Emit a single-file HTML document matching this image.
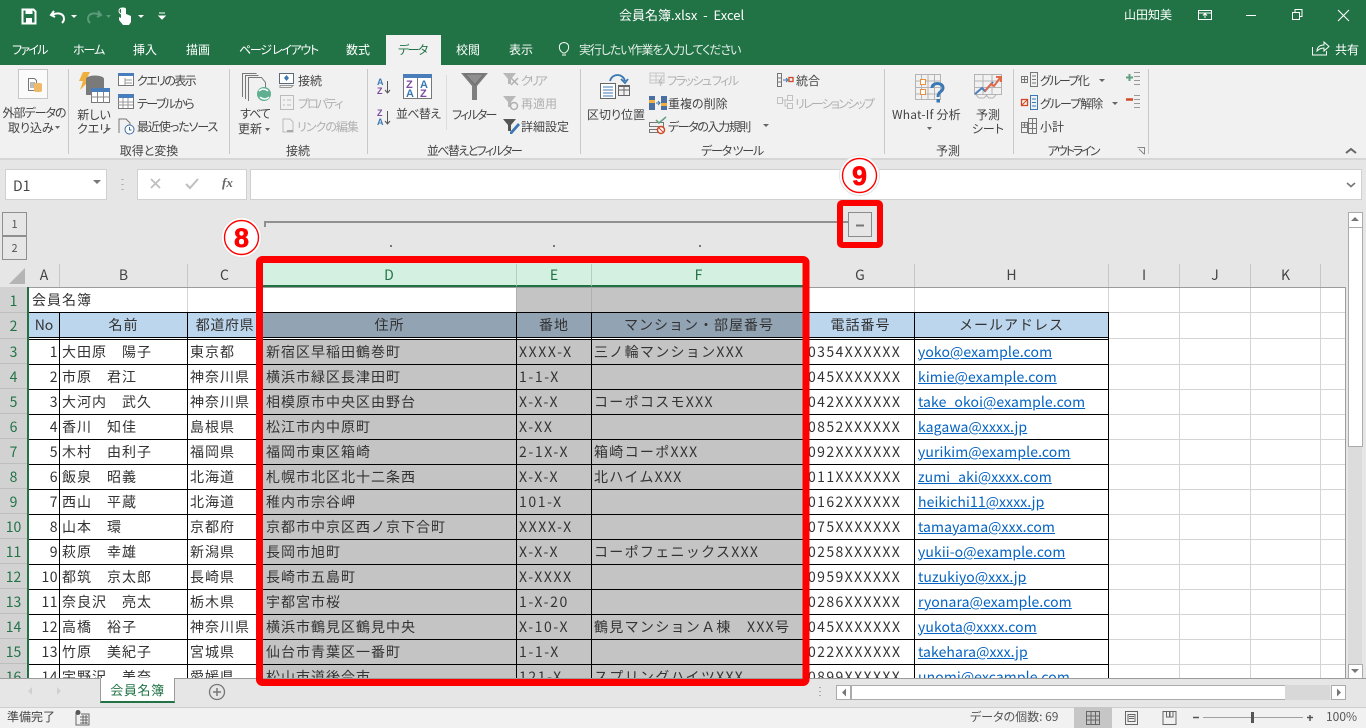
<!DOCTYPE html>
<html lang="ja"><head><meta charset="utf-8"><title>会員名簿.xlsx - Excel</title>
<style>
html,body{margin:0;padding:0;width:1366px;height:728px;overflow:hidden;background:#e6e6e6}
body{position:relative;font-family:"Noto Sans CJK JP","Liberation Sans",sans-serif;color:#444}
.abs,.t,.tab,.hd,.rh,.v,.h{position:absolute}
#ov{position:absolute;left:0;top:0;z-index:5}
.t{font-size:12px;line-height:16px;white-space:nowrap;font-feature-settings:"palt";color:#444;margin-top:1px}
.cn{transform:translateX(-50%)}
.g{color:#b0b0b0}
.tab{top:42px;font-size:12px;line-height:16px;color:#fff;white-space:nowrap;font-feature-settings:"palt"}
.hd{top:264px;height:23px;line-height:23px;text-align:center;font-size:14px;color:#444;border-right:1px solid #c6c6c6;box-sizing:border-box}
.hs{background:#d3f0e0;color:#217346;border-right:1px solid #b4cfc0;border-bottom:2px solid #217346}
.rh{left:0;width:27px;height:25px;line-height:27px;text-align:center;font-size:14px;color:#217346;border-bottom:1px solid #bdbdbd;box-sizing:border-box}
.v{width:1px}.h{height:1px}
.r{position:absolute;left:0;width:1345px;height:25px;line-height:25px;font-size:14px;letter-spacing:1px;white-space:nowrap;color:#333;margin-top:1px}
.r span{position:absolute;top:0}
.a{right:1287px;letter-spacing:.5px}.b{left:62px}.c{left:190px}.d{left:266px}.e{left:519px;letter-spacing:1.6px}.f{left:594px;letter-spacing:1.3px}.k{left:808px;letter-spacing:1.4px}
.m{left:918px;color:#0563c1;text-decoration:underline;letter-spacing:.1px}
.hc{position:absolute;top:313px;height:25px;line-height:25px;text-align:center;font-size:14px;letter-spacing:1px;color:#333}
</style></head><body>

<!-- title + tabs -->
<div class="abs" style="left:0;top:0;width:1366px;height:65px;background:#217346"></div>
<div class="abs" style="left:386px;top:35px;width:55px;height:31px;background:#f1f1f1"></div>
<div class="abs" style="left:0;top:65px;width:1366px;height:93px;background:#f1f1f1;border-bottom:2px solid #d6d6d6"></div>
<div class="t" style="left:619px;top:6px;font-size:13px;color:#fff;white-space:pre">会員名簿.xlsx  -  Excel</div>
<div class="t" style="left:1124px;top:6px;font-size:12px;color:#fff">山田知美</div>
<div class="tab" style="left:12px;letter-spacing:-1.7px">ファイル</div>
<div class="tab" style="left:73px;letter-spacing:-1px">ホーム</div>
<div class="tab" style="left:133px">挿入</div>
<div class="tab" style="left:186px">描画</div>
<div class="tab" style="left:239px;letter-spacing:-1.3px">ページ レイアウト</div>
<div class="tab" style="left:346px">数式</div>
<div class="tab" style="left:398px;color:#217346;letter-spacing:-1.6px">データ</div>
<div class="tab" style="left:456px">校閲</div>
<div class="tab" style="left:509px">表示</div>
<div class="tab" style="left:579px;color:#e4efe8;letter-spacing:-1.1px">実行したい作業を入力してください</div>
<div class="tab" style="left:1335px">共有</div>

<!-- ribbon text -->
<div class="t cn" style="left:34px;top:104px;letter-spacing:-1px">外部データの</div>
<div class="t" style="left:8px;top:119px">取り込み</div>
<div class="t cn" style="left:94px;top:106px">新しい</div>
<div class="t" style="left:77px;top:120px">クエリ</div>
<div class="t" style="left:137px;top:72px;letter-spacing:-1.6px">クエリの表示</div>
<div class="t" style="left:137px;top:95px;letter-spacing:-1.6px">テーブルから</div>
<div class="t" style="left:137px;top:118px;letter-spacing:-1.1px">最近使ったソース</div>
<div class="t cn" style="left:149px;top:142px">取得と変換</div>
<div class="t cn" style="left:255px;top:105px;letter-spacing:-1px">すべて</div>
<div class="t" style="left:238px;top:120px">更新</div>
<div class="t" style="left:298px;top:72px">接続</div>
<div class="t g" style="left:298px;top:95px;letter-spacing:-2px">プロパティ</div>
<div class="t g" style="left:297px;top:118px;letter-spacing:-1px">リンクの編集</div>
<div class="t cn" style="left:298px;top:142px">接続</div>
<div class="t" style="left:396px;top:105px;letter-spacing:-.7px">並べ替え</div>
<div class="t" style="left:452px;top:106px;letter-spacing:-1.8px">フィルター</div>
<div class="t g" style="left:521px;top:72px;letter-spacing:-2.5px">クリア</div>
<div class="t g" style="left:521px;top:95px">再適用</div>
<div class="t" style="left:521px;top:118px">詳細設定</div>
<div class="t cn" style="left:474px;top:142px;letter-spacing:-1.6px">並べ替えとフィルター</div>
<div class="t" style="left:587px;top:106px">区切り位置</div>
<div class="t g" style="left:667px;top:72px;letter-spacing:-1.5px">フラッシュ フィル</div>
<div class="t" style="left:668px;top:95px">重複の削除</div>
<div class="t" style="left:668px;top:118px;letter-spacing:-1.4px">データの入力規則</div>
<div class="t" style="left:796px;top:72px">統合</div>
<div class="t g" style="left:795px;top:95px;letter-spacing:-1.8px">リレーションシップ</div>
<div class="t cn" style="left:732px;top:142px;letter-spacing:-1.2px">データ ツール</div>
<div class="t" style="left:892px;top:106px;letter-spacing:.2px">What-If 分析</div>
<div class="t cn" style="left:988px;top:106px">予測</div>
<div class="t cn" style="left:988px;top:120px">シート</div>
<div class="t cn" style="left:948px;top:142px">予測</div>
<div class="t" style="left:1040px;top:72px;letter-spacing:-1.6px">グループ化</div>
<div class="t" style="left:1040px;top:95px;letter-spacing:-1px">グループ解除</div>
<div class="t" style="left:1040px;top:118px">小計</div>
<div class="t cn" style="left:1073px;top:142px;letter-spacing:-2px">アウトライン</div>

<!-- formula bar -->
<div class="abs" style="left:5px;top:169px;width:100px;height:29px;background:#fff;border:1px solid #d0d0d0"></div>
<div class="t" style="left:13px;top:176px;font-size:14px;line-height:18px">D1</div>
<div class="abs" style="left:137px;top:169px;width:108px;height:29px;background:#fff;border:1px solid #d0d0d0"></div>
<div class="abs" style="left:250px;top:169px;width:1110px;height:29px;background:#fff;border:1px solid #d0d0d0"></div>
<div class="t" style="left:222px;top:174px;font-family:'Liberation Serif',serif;font-style:italic;font-weight:bold;font-size:13px;color:#666">fx</div>

<!-- outline level -->
<div class="abs" style="left:2px;top:212px;width:23px;height:22px;border:1px solid #8f8f8f;text-align:center;font-size:11px;line-height:22px;color:#555">1</div>
<div class="abs" style="left:2px;top:236px;width:23px;height:22px;border:1px solid #8f8f8f;text-align:center;font-size:11px;line-height:22px;color:#555">2</div>

<!-- sheet -->
<div class="abs" style="left:29px;top:288px;width:1316px;height:390px;background:#fff"></div>
<div class="abs" style="left:517px;top:288px;width:289px;height:25px;background:#c4c4c4"></div>
<div class="abs" style="left:29px;top:313px;width:233px;height:25px;background:#bcd6ee"></div>
<div class="abs" style="left:262px;top:313px;width:544px;height:25px;background:#92a3b3"></div>
<div class="abs" style="left:806px;top:313px;width:302px;height:25px;background:#bcd6ee"></div>
<div class="abs" style="left:262px;top:339px;width:544px;height:339px;background:#c4c4c4"></div>
<div class="abs" style="left:0;top:287px;width:27px;height:391px;background:#d2d2d2"></div>
<div class="abs" style="left:27px;top:287px;width:2px;height:391px;background:#217346"></div>
<div class="abs" style="left:29px;top:287px;width:1317px;height:1px;background:#9c9c9c"></div>
<div class="abs" style="left:1345px;top:287px;width:1px;height:391px;background:#9c9c9c"></div>

<!-- light gridlines -->
<div class="v" style="left:187px;top:288px;height:25px;background:#d4d4d4"></div>
<div class="v" style="left:516px;top:288px;height:25px;background:#b0b0b0"></div>
<div class="v" style="left:591px;top:288px;height:25px;background:#b0b0b0"></div>
<div class="v" style="left:806px;top:288px;height:25px;background:#d4d4d4"></div>
<div class="v" style="left:914px;top:288px;height:25px;background:#d4d4d4"></div>
<div class="v" style="left:1108px;top:288px;height:25px;background:#d4d4d4"></div>
<div class="v" style="left:1179px;top:288px;height:390px;background:#d4d4d4"></div>
<div class="v" style="left:1250px;top:288px;height:390px;background:#d4d4d4"></div>
<div class="v" style="left:1320px;top:288px;height:390px;background:#d4d4d4"></div>
<div class="h" style="left:1109px;top:312px;width:236px;background:#d4d4d4"></div>
<div class="h" style="left:1109px;top:338px;width:236px;background:#d4d4d4"></div>
<div class="h" style="left:1109px;top:364px;width:236px;background:#d4d4d4"></div>
<div class="h" style="left:1109px;top:389px;width:236px;background:#d4d4d4"></div>
<div class="h" style="left:1109px;top:414px;width:236px;background:#d4d4d4"></div>
<div class="h" style="left:1109px;top:439px;width:236px;background:#d4d4d4"></div>
<div class="h" style="left:1109px;top:464px;width:236px;background:#d4d4d4"></div>
<div class="h" style="left:1109px;top:489px;width:236px;background:#d4d4d4"></div>
<div class="h" style="left:1109px;top:514px;width:236px;background:#d4d4d4"></div>
<div class="h" style="left:1109px;top:539px;width:236px;background:#d4d4d4"></div>
<div class="h" style="left:1109px;top:564px;width:236px;background:#d4d4d4"></div>
<div class="h" style="left:1109px;top:589px;width:236px;background:#d4d4d4"></div>
<div class="h" style="left:1109px;top:614px;width:236px;background:#d4d4d4"></div>
<div class="h" style="left:1109px;top:639px;width:236px;background:#d4d4d4"></div>
<div class="h" style="left:1109px;top:664px;width:236px;background:#d4d4d4"></div>

<!-- black borders -->
<div class="v" style="left:59px;top:312px;height:366px;background:#000"></div>
<div class="v" style="left:187px;top:312px;height:366px;background:#000"></div>
<div class="v" style="left:262px;top:312px;height:366px;background:#000"></div>
<div class="v" style="left:516px;top:312px;height:366px;background:#000"></div>
<div class="v" style="left:591px;top:312px;height:366px;background:#000"></div>
<div class="v" style="left:806px;top:312px;height:366px;background:#000"></div>
<div class="v" style="left:914px;top:312px;height:366px;background:#000"></div>
<div class="v" style="left:1108px;top:312px;height:366px;background:#000"></div>
<div class="h" style="left:29px;top:312px;width:1080px;background:#000"></div>
<div class="h" style="left:29px;top:337px;width:1080px;background:#000"></div>
<div class="h" style="left:29px;top:339px;width:1080px;background:#000"></div>
<div class="h" style="left:29px;top:364px;width:1080px;background:#000"></div>
<div class="h" style="left:29px;top:389px;width:1080px;background:#000"></div>
<div class="h" style="left:29px;top:414px;width:1080px;background:#000"></div>
<div class="h" style="left:29px;top:439px;width:1080px;background:#000"></div>
<div class="h" style="left:29px;top:464px;width:1080px;background:#000"></div>
<div class="h" style="left:29px;top:489px;width:1080px;background:#000"></div>
<div class="h" style="left:29px;top:514px;width:1080px;background:#000"></div>
<div class="h" style="left:29px;top:539px;width:1080px;background:#000"></div>
<div class="h" style="left:29px;top:564px;width:1080px;background:#000"></div>
<div class="h" style="left:29px;top:589px;width:1080px;background:#000"></div>
<div class="h" style="left:29px;top:614px;width:1080px;background:#000"></div>
<div class="h" style="left:29px;top:639px;width:1080px;background:#000"></div>
<div class="h" style="left:29px;top:664px;width:1080px;background:#000"></div>

<!-- column headers -->
<div class="hd" style="left:29px;width:31px">A</div>
<div class="hd" style="left:60px;width:128px">B</div>
<div class="hd" style="left:188px;width:74px">C</div>
<div class="hd hs" style="left:262px;width:255px">D</div>
<div class="hd hs" style="left:517px;width:75px">E</div>
<div class="hd hs" style="left:592px;width:214px">F</div>
<div class="hd" style="left:806px;width:109px">G</div>
<div class="hd" style="left:915px;width:194px">H</div>
<div class="hd" style="left:1109px;width:71px">I</div>
<div class="hd" style="left:1180px;width:71px">J</div>
<div class="hd" style="left:1251px;width:70px">K</div>

<!-- row headers -->
<div class="rh" style="top:288px">1</div>
<div class="rh" style="top:313px;height:26px;line-height:26px">2</div>
<div class="rh" style="top:339px">3</div>
<div class="rh" style="top:364px">4</div>
<div class="rh" style="top:389px">5</div>
<div class="rh" style="top:414px">6</div>
<div class="rh" style="top:439px">7</div>
<div class="rh" style="top:464px">8</div>
<div class="rh" style="top:489px">9</div>
<div class="rh" style="top:514px">10</div>
<div class="rh" style="top:539px">11</div>
<div class="rh" style="top:564px">12</div>
<div class="rh" style="top:589px">13</div>
<div class="rh" style="top:614px">14</div>
<div class="rh" style="top:639px">15</div>
<div class="rh" style="top:664px">16</div>

<!-- cells -->
<div class="r" style="top:287px"><span style="left:32px">会員名簿</span></div>
<div class="hc" style="left:29px;width:30px;letter-spacing:0">No</div>
<div class="hc" style="left:60px;width:127px">名前</div>
<div class="hc" style="left:188px;width:74px;letter-spacing:.6px">都道府県</div>
<div class="hc" style="left:263px;width:253px">住所</div>
<div class="hc" style="left:517px;width:74px">番地</div>
<div class="hc" style="left:592px;width:214px">マンション・部屋番号</div>
<div class="hc" style="left:807px;width:107px">電話番号</div>
<div class="hc" style="left:915px;width:193px">メールアドレス</div>

<div class="r" style="top:339px"><span class="a">1</span><span class="b">大田原　陽子</span><span class="c">東京都</span><span class="d">新宿区早稲田鶴巻町</span><span class="e">XXXX-X</span><span class="f">三ノ輪マンションXXX</span><span class="k">0354XXXXXX</span><span class="m">yoko@example.com</span></div>
<div class="r" style="top:364px"><span class="a">2</span><span class="b">市原　君江</span><span class="c">神奈川県</span><span class="d">横浜市緑区長津田町</span><span class="e">1-1-X</span><span class="k">045XXXXXXX</span><span class="m">kimie@example.com</span></div>
<div class="r" style="top:389px"><span class="a">3</span><span class="b">大河内　武久</span><span class="c">神奈川県</span><span class="d">相模原市中央区由野台</span><span class="e">X-X-X</span><span class="f">コーポコスモXXX</span><span class="k">042XXXXXXX</span><span class="m">take_okoi@example.com</span></div>
<div class="r" style="top:414px"><span class="a">4</span><span class="b">香川　知佳</span><span class="c">島根県</span><span class="d">松江市内中原町</span><span class="e">X-XX</span><span class="k">0852XXXXXX</span><span class="m">kagawa@xxxx.jp</span></div>
<div class="r" style="top:439px"><span class="a">5</span><span class="b">木村　由利子</span><span class="c">福岡県</span><span class="d">福岡市東区箱崎</span><span class="e">2-1X-X</span><span class="f">箱崎コーポXXX</span><span class="k">092XXXXXXX</span><span class="m">yurikim@example.com</span></div>
<div class="r" style="top:464px"><span class="a">6</span><span class="b">飯泉　昭義</span><span class="c">北海道</span><span class="d">札幌市北区北十二条西</span><span class="e">X-X-X</span><span class="f">北ハイムXXX</span><span class="k">011XXXXXXX</span><span class="m">zumi_aki@xxxx.com</span></div>
<div class="r" style="top:489px"><span class="a">7</span><span class="b">西山　平蔵</span><span class="c">北海道</span><span class="d">稚内市宗谷岬</span><span class="e">101-X</span><span class="k">0162XXXXXX</span><span class="m">heikichi11@xxxx.jp</span></div>
<div class="r" style="top:514px"><span class="a">8</span><span class="b">山本　環</span><span class="c">京都府</span><span class="d">京都市中京区西ノ京下合町</span><span class="e">XXXX-X</span><span class="k">075XXXXXXX</span><span class="m">tamayama@xxx.com</span></div>
<div class="r" style="top:539px"><span class="a">9</span><span class="b">萩原　幸雄</span><span class="c">新潟県</span><span class="d">長岡市旭町</span><span class="e">X-X-X</span><span class="f">コーポフェニックスXXX</span><span class="k">0258XXXXXX</span><span class="m">yukii-o@example.com</span></div>
<div class="r" style="top:564px"><span class="a">10</span><span class="b">都筑　京太郎</span><span class="c">長崎県</span><span class="d">長崎市五島町</span><span class="e">X-XXXX</span><span class="k">0959XXXXXX</span><span class="m">tuzukiyo@xxx.jp</span></div>
<div class="r" style="top:589px"><span class="a">11</span><span class="b">奈良沢　亮太</span><span class="c">栃木県</span><span class="d">宇都宮市桜</span><span class="e">1-X-20</span><span class="k">0286XXXXXX</span><span class="m">ryonara@example.com</span></div>
<div class="r" style="top:614px"><span class="a">12</span><span class="b">高橋　裕子</span><span class="c">神奈川県</span><span class="d">横浜市鶴見区鶴見中央</span><span class="e">X-10-X</span><span class="f">鶴見マンションＡ棟　XXX号</span><span class="k">045XXXXXXX</span><span class="m">yukota@xxxx.com</span></div>
<div class="r" style="top:639px"><span class="a">13</span><span class="b">竹原　美紀子</span><span class="c">宮城県</span><span class="d">仙台市青葉区一番町</span><span class="e">1-1-X</span><span class="k">022XXXXXXX</span><span class="m">takehara@xxx.jp</span></div>
<div class="r" style="top:664px"><span class="a">14</span><span class="b">宇野沢　美奈</span><span class="c">愛媛県</span><span class="d">松山市道後今市</span><span class="e">121-X</span><span class="f">スプリングハイツXXX</span><span class="k">0899XXXXXX</span><span class="m">unomi@excample.com</span></div>

<!-- bottom bars -->
<div class="abs" style="left:0;top:678px;width:1366px;height:29px;background:#e6e6e6;border-top:1px solid #9c9c9c;box-sizing:border-box;z-index:2"></div>
<div class="abs" style="left:100px;top:678px;width:75px;height:25px;background:#fff;border:1px solid #9c9c9c;border-top:0;border-bottom:2px solid #217346;box-sizing:border-box;text-align:center;font-size:13px;line-height:24px;color:#217346;letter-spacing:.6px;z-index:3">会員名簿</div>
<div class="abs" style="left:851px;top:685px;width:434px;height:13px;background:#fff;border:1px solid #ababab;z-index:3"></div>
<div class="abs" style="left:0;top:707px;width:1366px;height:21px;background:#f1f1f1;border-top:1px solid #cfcfcf;box-sizing:border-box;z-index:3"></div>
<div class="abs" style="left:1074px;top:707px;width:38px;height:21px;background:#c6c6c6;z-index:3"></div>
<div class="t" style="left:7px;top:708px;z-index:4">準備完了</div>
<div class="t" style="left:970px;top:708px;z-index:4;color:#555">データの個数: 69</div>
<div class="t" style="left:1326px;top:708px;z-index:4;color:#555">100%</div>

<!-- vertical scrollbar -->
<div class="abs" style="left:1348px;top:212px;width:14px;height:466px;background:#dcdcdc"></div>
<div class="abs" style="left:1348px;top:212px;width:13px;height:14px;background:#fff;border:1px solid #ababab"></div>
<div class="abs" style="left:1348px;top:227px;width:13px;height:218px;background:#fff;border:1px solid #ababab"></div>
<div class="abs" style="left:1348px;top:664px;width:13px;height:13px;background:#fff;border:1px solid #ababab"></div>

<!-- icons and annotations -->
<svg id="ov" width="1366" height="728" viewBox="0 0 1366 728" xmlns="http://www.w3.org/2000/svg" fill="none">
<!-- QAT -->
<path d="M22.5 9.5h11l2 2v12h-13z" stroke="#fff" stroke-width="2"/><rect x="25.5" y="10" width="7" height="4" fill="#fff"/><rect x="26" y="18" width="6" height="5" fill="#fff"/>
<path d="M54 11l-3 4 4 2M52 15c5-3 12-2 12 4 0 2-1 3-2 4" stroke="#fff" stroke-width="2"/><path d="M71 15h6l-3 3z" fill="#fff"/>
<path d="M98 11l3 4-4 2M100 15c-5-3-12-2-12 4 0 2 1 3 2 4" stroke="#5b9a78" stroke-width="2"/><path d="M106 15h5l-2.500 3z" fill="#5b9a78"/>
<path d="M121 9c0-2 5-2 5 0v5l5 2v6l-2 3h-6l-4-5 0-3 2 1z" fill="#fff"/><circle cx="122" cy="11" r="3" stroke="#fff"/>
<path d="M138 15h6l-3 3z" fill="#fff"/>
<path d="M159 13h6M159 16h6l-3 3z" stroke="#fff" fill="#fff"/>
<!-- window controls -->
<path d="M1198.500 10.500h13v9h-13zM1198.500 13h13M1205 18v-4M1203 15.500l2-2 2 2" stroke="#fff"/>
<path d="M1246 15.500h10" stroke="#fff"/>
<path d="M1292.500 12.500h7v7h-7zM1295 12v-2.500h7v7h-2.500" stroke="#fff"/>
<path d="M1338 10l11 11M1349 10l-11 11" stroke="#fff" stroke-width="1.100"/>
<!-- tell me / share -->
<path d="M563 53c-5-3-5-10 1-10.500 6 .5 6 7.500 1 10.500zM562 55h4" stroke="#fff"/>
<path d="M1312.500 47v8h14v-4M1317 51c0-4 3-6 7-6v-3l5 4.500-5 4.500v-3c-3 0-5 1-7 3z" stroke="#fff"/>
<!-- group separators -->
<path d="M68.500 69v85M229.500 69v85M367.500 69v85M580.500 69v85M884.500 69v85M1013.500 69v85M1148.500 69v85" stroke="#c8c8c8"/>
<path d="M446.500 75v55" stroke="#dcdcdc"/>
<!-- external data -->
<rect x="18.500" y="69.500" width="29" height="29" fill="#fbfbfb" stroke="#c6c6c6"/>
<path d="M28.500 78.500h6l2 2v10h-8z" stroke="#777" fill="#fff"/><path d="M30 83h5M30 85h5M30 87h5" stroke="#777"/><rect x="34" y="83" width="8" height="9" rx="2" fill="#eeb968"/>
<path d="M55 126h5l-2.500 3z" fill="#666"/>
<!-- new query -->
<path d="M83 72h7l-4 8h4l-10 10 3-9h-4z" fill="#f0b040"/>
<ellipse cx="95" cy="79" rx="9" ry="3.500" fill="#7a7a7a"/><path d="M86 79v16h18V79z" fill="#7a7a7a"/>
<rect x="91.500" y="88.500" width="18" height="14" fill="#fff" stroke="#777"/><rect x="91" y="88" width="19" height="4" fill="#4a7ebb"/><path d="M91 97h19M97.500 92v11M103.500 92v11" stroke="#888"/>
<path d="M105 128h6l-3 3z" fill="#666"/>
<rect x="118.500" y="73.500" width="15" height="12" fill="#fff" stroke="#777"/><rect x="118" y="73" width="16" height="3" fill="#4a7ebb"/><path d="M125 78v7M125 80h7M125 83h7" stroke="#999"/>
<rect x="118.500" y="95.500" width="15" height="13" fill="#fff" stroke="#777"/><rect x="118" y="94" width="16" height="4" fill="#4a7ebb"/><path d="M118 102h15M118 105h15M123 98v10M128 98v10" stroke="#999"/>
<path d="M119 133v-14h7l4 4v4" stroke="#777"/><circle cx="129.500" cy="129.500" r="4.500" fill="#fff" stroke="#3c6ea8"/><path d="M129.500 127v3h2" stroke="#3c6ea8"/>
<!-- refresh all -->
<path d="M242.500 97V73.500h14M245.500 99V75.500h13M248.500 101V77.500h13l4 5V92" stroke="#777" fill="#f1f1f1"/>
<circle cx="264" cy="94" r="7" fill="#5fb090"/><path d="M259 91c3-3 7-2 9 0M269 97c-3 3-7 2-9 0" stroke="#fff" stroke-width="1.500"/>
<path d="M265 128h5l-2.500 3z" fill="#666"/>
<rect x="279.500" y="73.500" width="14" height="10" stroke="#5a6a7a" fill="#fff"/><path d="M286.500 75l2.500 3-2.500 3-2.500-3z" fill="#3c78b4"/><path d="M280 85.500h13l-2 2h-11z" stroke="#999"/>
<rect x="280.500" y="95.500" width="13" height="14" stroke="#bbb"/><path d="M283 100h2M283 105h2M287 100h4M287 105h4" stroke="#bbb"/>
<path d="M283 132v-13h7l3 3v10z" stroke="#bbb"/><path d="M287 131h6" stroke="#aaa" stroke-width="2"/>
<!-- sort -->
<text x="377" y="85" font-family="Liberation Sans,sans-serif" font-size="9" font-weight="bold" fill="#3c78b4">A</text><text x="377" y="94" font-family="Liberation Sans,sans-serif" font-size="9" font-weight="bold" fill="#7a4ba0">Z</text>
<path d="M387.500 81v12M385 90l2.500 3 2.500-3" stroke="#555"/>
<text x="377" y="116" font-family="Liberation Sans,sans-serif" font-size="9" font-weight="bold" fill="#7a4ba0">Z</text><text x="377" y="125" font-family="Liberation Sans,sans-serif" font-size="9" font-weight="bold" fill="#3c78b4">A</text>
<path d="M387.500 111v13M385 121l2.500 3 2.500-3" stroke="#555"/>
<rect x="403.500" y="74.500" width="28" height="24" fill="#fff" stroke="#777"/><rect x="403" y="74" width="29" height="4" fill="#4a7ebb"/><path d="M417.500 78v20" stroke="#777"/>
<text x="406" y="88" font-family="Liberation Sans,sans-serif" font-size="11" font-weight="bold" fill="#7a4ba0">Z</text><text x="420" y="88" font-family="Liberation Sans,sans-serif" font-size="11" font-weight="bold" fill="#3c78b4">A</text>
<text x="406" y="97" font-family="Liberation Sans,sans-serif" font-size="11" font-weight="bold" fill="#3c78b4">A</text><text x="420" y="97" font-family="Liberation Sans,sans-serif" font-size="11" font-weight="bold" fill="#7a4ba0">Z</text>
<!-- filter -->
<path d="M461 73h27l-11 13v14h-5V86z" fill="#7f7f7f"/><path d="M465 74h19l-9 11z" fill="#8e8e8e" stroke="#6e6e6e"/>
<path d="M503 73h13l-5 6v5h-3v-5z" fill="#b8b8b8"/><path d="M511 78l7 7M518 78l-7 7" stroke="#b0b0b0" stroke-width="1.500"/>
<path d="M503 96h13l-5 6v5h-3v-5z" fill="#b8b8b8"/><circle cx="514" cy="106" r="3.500" stroke="#b0b0b0" stroke-width="1.500"/>
<path d="M503 119h13l-5 6v6h-3v-6z" fill="#555"/><path d="M510 132l8-9 2 2-8 9h-2z" fill="#3c78b4"/>
<!-- text to columns -->
<rect x="600.500" y="83.500" width="15" height="15" fill="#fff" stroke="#666"/><path d="M603 87h10M603 90h10M603 93h10M603 96h10" stroke="#3c78b4"/>
<path d="M618.500 85.500h11v10h-11zM618 90h12M624 86v10" stroke="#666"/><rect x="618" y="85" width="12" height="2" fill="#666"/>
<path d="M610 81c2-8 13-8 15 0M621 79l4 4 3-4" stroke="#3c78b4" stroke-width="1.800"/>
<!-- flash fill, dup, validation -->
<path d="M650 73h14v10h-14zM650 76h14M650 80h14M656 73v10" stroke="#c6c6c6"/><path d="M662 77l-3 5h3l-2 4" stroke="#b8b8b8"/>
<rect x="649" y="96" width="6" height="14" fill="#4a6fa0"/><rect x="649" y="100" width="6" height="3" fill="#f0b040"/><rect x="661" y="96" width="6" height="14" fill="#4a6fa0"/><rect x="661" y="103" width="6" height="3" fill="#f0b040"/><path d="M656 103h4M658 101l2 2-2 2" stroke="#3c78b4"/>
<path d="M649.500 122.500h14v4h-14zM649.500 129.500h10v3h-10z" stroke="#777"/><path d="M656 120l3 3 7-6" stroke="#5fa080" stroke-width="1.500"/><circle cx="661" cy="130" r="3.500" fill="#fff" stroke="#d24726" stroke-width="1.500"/><path d="M659 128l4 4" stroke="#d24726"/>
<path d="M763 124h6l-3 3z" fill="#666"/>
<!-- consolidate, relations -->
<path d="M777.500 73.500h4v13h-4zM777.500 78h4M777.500 82h4" stroke="#777"/><path d="M783 80h4M786 78l2 2-2 2" stroke="#3c78b4"/><rect x="789" y="77.500" width="4" height="4" stroke="#d24726" stroke-width="1.300"/>
<path d="M777.500 97.500h5v6h-5zM787.500 95.500h5v5h-5zM787.500 103.500h5v5h-5zM782 100h5M785 100v6h3" stroke="#c0c0c0"/>
<!-- what-if -->
<path d="M915.500 74.500h25v25h-25zM915 81h25M915 87.500h25M915 94h25M921.500 74v25M928 74v25M934.500 74v25" stroke="#b4b4b4"/>
<rect x="920.500" y="79.500" width="5" height="5" fill="#fff" stroke="#e89040"/><rect x="920.500" y="89.500" width="5" height="5" fill="#fff" stroke="#e89040"/>
<path d="M932 88c0-6 11-6 11 0 0 4-5 3-5 9" stroke="#3c78b4" stroke-width="3"/><rect x="936.500" y="99" width="3.500" height="3.500" fill="#3c78b4"/>
<path d="M927 127h5l-2.500 3z" fill="#666"/>
<!-- forecast -->
<path d="M974.500 74.500h27v20h-27zM974 81h27M974 87.500h27M983 74v21M992 74v21" stroke="#b4b4b4"/>
<path d="M975 94l7-6 3 3 8-9" stroke="#4a7ebb" stroke-width="2"/><path d="M985 91l6-7 3 2 6-8M996 77h5v5" stroke="#e06a48" stroke-width="2"/>
<path d="M976 95l3 3h5l3-3M986 95l3 3h4l3-3" stroke="#b4b4b4"/>
<!-- outline -->
<path d="M1021.500 76.500h6v6h-6zM1022 79.500h5M1024.500 77v5M1030.500 72.500h7v14h-7zM1032 76h4M1032 79.500h4M1032 83h4" stroke="#777"/>
<path d="M1030.500 95.500h7v14h-7zM1032 99h4M1032 102.500h4M1032 106h4" stroke="#3c78b4"/><rect x="1021.500" y="99.500" width="6" height="6" stroke="#d24726" stroke-width="1.300"/><path d="M1022 105l5-5" stroke="#d24726"/>
<path d="M1021.500 122.500h6v5h-6zM1021.500 127.500h6v5h-6zM1022 125h5M1024.500 123v4M1028.500 118.500h8v15h-8zM1028 123.500h9M1028 128.500h9M1032.500 118v16" stroke="#777"/>
<path d="M1099 79h6l-3 3zM1112 102h6l-3 3z" fill="#666"/>
<path d="M1126 77.500h7M1129.500 74v7" stroke="#5fa080" stroke-width="2"/><path d="M1134 72.500h6M1134 76.500h6M1134 80.500h6M1134 84.500h6" stroke="#999"/>
<path d="M1126 99.500h7" stroke="#d24726" stroke-width="2.500"/><path d="M1134 95.500h6M1134 99.500h6M1134 103.500h6M1134 107.500h6" stroke="#999"/>
<path d="M1137.500 147.500h7v7M1139 149l5 5" stroke="#888"/>
<path d="M1346 153l5-4 5 4" stroke="#666" stroke-width="2"/>
<!-- formula bar icons -->
<path d="M93 180h8l-4 4z" fill="#777"/>
<path d="M122.500 179v1M122.500 184v1M122.500 189v1" stroke="#aaa" stroke-width="2"/>
<path d="M151 179l9 9M160 179l-9 9" stroke="#bfbfbf" stroke-width="1.800"/>
<path d="M186 184l4 4 8-9" stroke="#bfbfbf" stroke-width="2"/>
<path d="M1347 183l4 3.500 4-3.500" stroke="#777" stroke-width="1.600"/>
<!-- corner triangle -->
<path d="M25 268v16H9z" fill="#b4b4b4"/>
<!-- outline bar -->
<path d="M265 227v-5h583" stroke="#909090" stroke-width="2"/>
<rect x="390" y="245" width="2" height="2" fill="#777"/><rect x="553" y="245" width="2" height="2" fill="#777"/><rect x="699" y="245" width="2" height="2" fill="#777"/>
<rect x="848.500" y="212.500" width="23" height="24" fill="#e6e6e6" stroke="#8a8a8a"/><path d="M856 225.500h8" stroke="#777" stroke-width="2"/>
<!-- scroll arrows -->
<path d="M1351 221l4-4 4 4z" fill="#777"/><path d="M1351 669l4 4 4-4z" fill="#777"/>
<!-- tab bar -->
<path d="M32 687v8l-4-4zM57 687v8l4-4z" fill="#d0d0d0"/>
<circle cx="217" cy="692" r="7.500" stroke="#777" stroke-width="1.300"/><path d="M213 692h8M217 688v8" stroke="#777" stroke-width="1.500"/>
<path d="M820 687v1M820 691v1M820 695v1" stroke="#aaa" stroke-width="2"/>
<rect x="836.500" y="685.500" width="14" height="14" fill="#fff" stroke="#ababab"/><path d="M846 688.500v8l-4-4z" fill="#777"/>
<rect x="1285" y="685" width="45" height="15" fill="#d8d8d8"/>
<rect x="1331.500" y="685.500" width="14" height="14" fill="#fff" stroke="#ababab"/><path d="M1337 688.500v8l4-4z" fill="#777"/>
<!-- status icons -->
<path d="M76 712v13h13v-11h-8" stroke="#666"/><circle cx="78" cy="712.500" r="2.500" fill="#555"/><path d="M80 717h8M80 720h8M80 723h8M83 715v9M86 715v9" stroke="#666"/>
<path d="M1086.500 711.500h13v13h-13zM1086 716h14M1086 720h14M1091 711v13M1095.500 711v13" stroke="#666"/>
<path d="M1125.500 711.500h12v13h-12zM1128 714.500h7v7h-7zM1129 716.500h5M1129 718.500h5" stroke="#666"/>
<path d="M1163 711.500h13v13h-13zM1169.500 711v6h-3v-6M1170 711v6h3v-6" stroke="#666"/>
<path d="M1193 717.500h6M1307 717.500h6M1310 715v6" stroke="#555" stroke-width="1.500"/><path d="M1203 717.500h100" stroke="#a0a0a0"/><rect x="1251" y="712" width="3" height="11" fill="#555"/>
<!-- red highlights -->
<rect x="259.500" y="259.500" width="546.500" height="423" rx="3" stroke="#f00" stroke-width="7"/>
<rect x="840" y="203" width="40" height="42" rx="2" stroke="#f00" stroke-width="6"/>
<!-- callouts -->
<circle cx="241.500" cy="237.500" r="20" fill="#fff" stroke="#e2e2e2"/><circle cx="241.500" cy="237.500" r="17" fill="#fff" stroke="#f00" stroke-width="1.400"/>
<text x="241.500" y="247" text-anchor="middle" font-family="Liberation Sans,sans-serif" font-size="27" font-weight="bold" fill="#f00" stroke="#f00" stroke-width=".6">8</text>
<circle cx="859.500" cy="175.500" r="20" fill="#fff" stroke="#e2e2e2"/><circle cx="859.500" cy="175.500" r="17" fill="#fff" stroke="#f00" stroke-width="1.400"/>
<text x="859.500" y="185" text-anchor="middle" font-family="Liberation Sans,sans-serif" font-size="27" font-weight="bold" fill="#f00" stroke="#f00" stroke-width=".6">9</text>
</svg>
</body></html>
